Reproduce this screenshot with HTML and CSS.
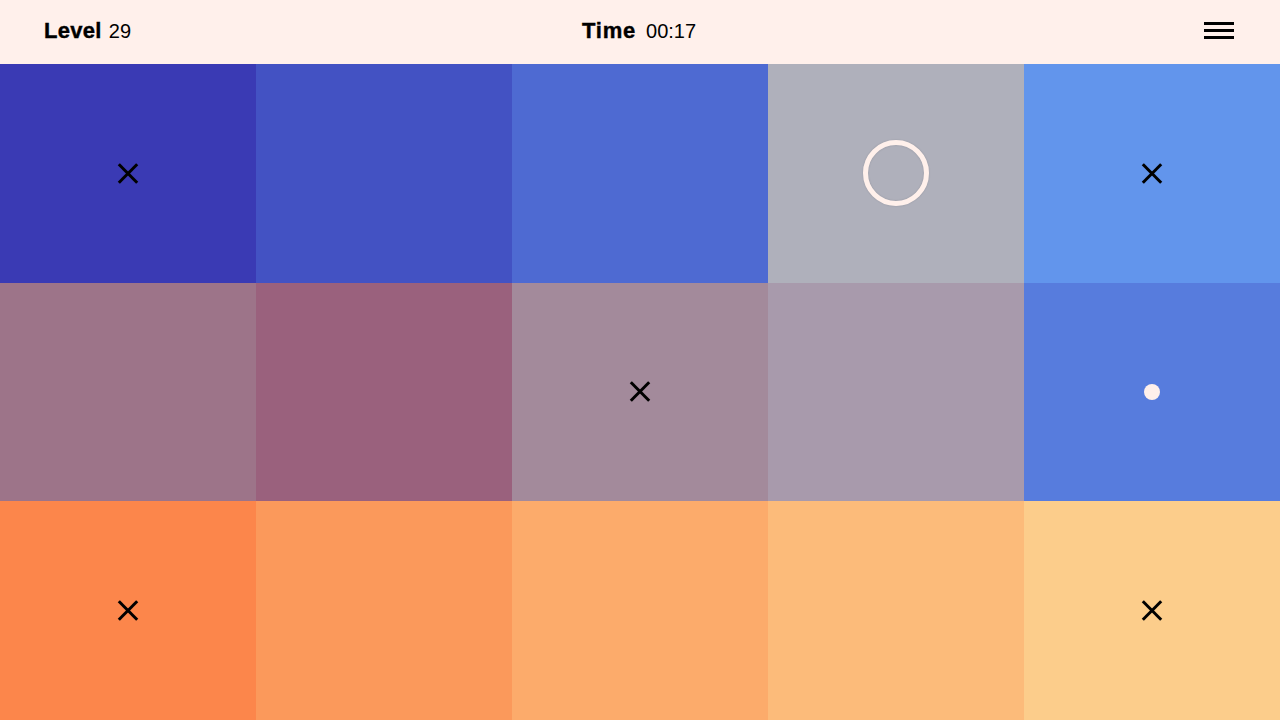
FILE: index.html
```html
<!DOCTYPE html>
<html>
<head>
<meta charset="utf-8">
<link rel="stylesheet" href="styles.css">
</head>
<body>
<div class="app">
  <header class="topbar">
    <div class="stat stat-left"><span class="label label-level">Level</span><span class="value">29</span></div>
    <div class="stat stat-center"><span class="label label-time">Time</span><span class="value">00:17</span></div>
    <div class="stat stat-right">
      <button class="menu" aria-label="Menu"><span></span><span></span><span></span></button>
    </div>
  </header>
  <main class="board">
    <div class="tile" style="background:#3a3ab4"><span class="cross"></span></div>
    <div class="tile" style="background:#4352c3"></div>
    <div class="tile" style="background:#4e6ad2"></div>
    <div class="tile" style="background:#afb0bb"><span class="ring"></span></div>
    <div class="tile" style="background:#6295ec"><span class="cross"></span></div>

    <div class="tile" style="background:#9d7489"></div>
    <div class="tile" style="background:#9a617d"></div>
    <div class="tile" style="background:#a38a9b"><span class="cross"></span></div>
    <div class="tile" style="background:#a89aac"></div>
    <div class="tile" style="background:#577cdd"><span class="dot"></span></div>

    <div class="tile" style="background:#fc864b"><span class="cross"></span></div>
    <div class="tile" style="background:#fb995b"></div>
    <div class="tile" style="background:#fcab6b"></div>
    <div class="tile" style="background:#fcbb7a"></div>
    <div class="tile" style="background:#fccd8b"><span class="cross"></span></div>
  </main>
</div>
</body>
</html>
```
FILE: styles.css
```css
* { box-sizing: border-box; }
html, body { margin: 0; padding: 0; height: 100%; }
body {
  font-family: "Liberation Sans", Arial, sans-serif;
  background: #fff0eb;
  color: #000;
}
.app {
  display: flex;
  flex-direction: column;
  width: 1280px;
  height: 720px;
}
.topbar {
  height: 64px;
  flex: 0 0 64px;
  background: #fff0eb;
  display: grid;
  grid-template-columns: 1fr 1fr 1fr;
  align-items: center;
  padding: 0 46px 2px 44px;
}
.stat { display: flex; align-items: baseline; gap: 7px; }
.stat-center { justify-content: center; gap: 10px; }
.stat-right { justify-content: flex-end; }
.label {
  font-weight: 700;
  font-size: 22px;
  -webkit-text-stroke: 0.4px #000;
}
.label-level { letter-spacing: 0.3px; }
.label-time { letter-spacing: 0.8px; }
.value { font-size: 20px; }
.menu {
  border: 0;
  background: none;
  padding: 0;
  width: 30px;
  display: flex;
  flex-direction: column;
  gap: 4px;
  cursor: pointer;
  margin-top: -1px;
}
.menu span { display: block; height: 3px; background: #000; }
.board {
  flex: 1;
  display: grid;
  grid-template-columns: repeat(5, 1fr);
  grid-template-rows: repeat(3, 1fr);
}
.tile {
  display: flex;
  align-items: center;
  justify-content: center;
}
.cross {
  position: relative;
  width: 22px;
  height: 22px;
}
.cross::before, .cross::after {
  content: "";
  position: absolute;
  left: -2px;
  top: 9.5px;
  width: 26px;
  height: 3px;
  background: #000;
  transform: rotate(45deg);
}
.cross::after { transform: rotate(-45deg); }
.ring {
  width: 66px;
  height: 66px;
  border-radius: 50%;
  border: 5px solid #fff0eb;
  box-shadow: 0 0 2px rgba(0,0,0,0.15), inset 0 0 2px rgba(0,0,0,0.15);
}
.dot {
  width: 16px;
  height: 16px;
  border-radius: 50%;
  background: #fff0eb;
}
```
